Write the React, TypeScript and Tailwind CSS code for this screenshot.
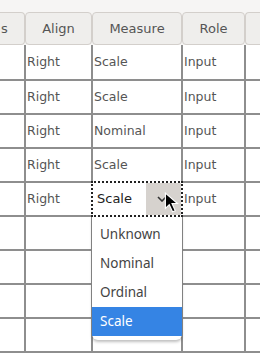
import { useState } from 'react'

const rows = [
  { align: 'Right', measure: 'Scale', role: 'Input' },
  { align: 'Right', measure: 'Scale', role: 'Input' },
  { align: 'Right', measure: 'Nominal', role: 'Input' },
  { align: 'Right', measure: 'Scale', role: 'Input' },
  { align: 'Right', measure: 'Scale', role: 'Input', editing: true },
  { align: '', measure: '', role: '' },
  { align: '', measure: '', role: '' },
  { align: '', measure: '', role: '' },
  { align: '', measure: '', role: '' },
]

const options = ['Unknown', 'Nominal', 'Ordinal', 'Scale']

function HeaderCell({ label, className }: { label: string; className: string }) {
  return (
    <div
      className={`${className} h-full flex items-center justify-center bg-[#efeeec] border border-[#d3cfcb] rounded-[4px] text-[13px] text-[#555]`}
    >
      {label}
    </div>
  )
}

function Cursor() {
  return (
    <svg width="16" height="22" viewBox="0 0 14 20" className="absolute left-[164px] top-[192px]">
      <path d="M1 1 L1 15 L4.5 11.5 L7.5 18 L10 17 L7 10.5 L12 10.5 Z" fill="#000" stroke="#fff" strokeWidth="1" />
    </svg>
  )
}

function App() {
  const [value] = useState('Scale')
  return (
    <div className="relative w-[260px] h-[358px] overflow-hidden bg-white font-['DejaVu_Sans',sans-serif]">
      <div className="h-[12px] bg-[#f6f5f4]" />
      <div className="flex h-[33px] bg-[#f6f5f4]">
        <HeaderCell label="s" className="w-[25px] justify-start! pl-[1px] border-l-0 rounded-l-none" />
        <HeaderCell label="Align" className="w-[67px]" />
        <HeaderCell label="Measure" className="w-[90px]" />
        <HeaderCell label="Role" className="w-[63px]" />
        <HeaderCell label="" className="flex-1 border-r-0 rounded-r-none" />
      </div>
      {rows.map((r, i) => (
        <div
          key={i}
          className={`flex border-b-2 border-[#8e8e8e] text-[12.5px] text-[#555] ${i === 0 ? 'h-[36px]' : 'h-[34px]'}`}
        >
          <div className="w-[26px] border-r-2 border-[#8e8e8e]" />
          <div className="w-[67px] border-r-2 border-[#8e8e8e] pl-[1px] flex items-center">{r.align}</div>
          <div className="w-[90px] border-r-2 border-[#8e8e8e] pl-[1px] flex items-center">{r.editing ? '' : r.measure}</div>
          <div className="w-[63px] border-r-2 border-[#8e8e8e] pl-[1px] flex items-center">{r.role}</div>
          <div className="flex-1" />
        </div>
      ))}

      {/* combo editor */}
      <div className="absolute left-[91px] top-[181px] w-[92px] h-[36px] border-2 border-dotted border-[#222] bg-white flex items-center">
        <span className="pl-[4px] text-[13px] text-[#222] flex-1">{value}</span>
        <div className="w-[35px] h-full bg-[#d6d2ce] flex items-center justify-center">
          <svg width="10" height="6" viewBox="0 0 10 6" className="-ml-[4px]">
            <path d="M1 1 L5 5 L9 1" fill="none" stroke="#333" strokeWidth="1.6" />
          </svg>
        </div>
      </div>

      {/* popup */}
      <div className="absolute left-[92px] top-[217px] w-[90px] pt-[3px] pb-[4px] bg-white rounded-b-[6px] shadow-[0_2px_3px_rgba(0,0,0,0.25)] font-['Noto_Sans',sans-serif] text-[13.5px]">
        {options.map((o) => (
          <div
            key={o}
            className={`h-[29px] pl-[8px] flex items-center ${o === value ? 'bg-[#3584e4] text-white' : 'text-[#444]'}`}
          >
            {o}
          </div>
        ))}
      </div>
      <Cursor />
    </div>
  )
}

export default App
